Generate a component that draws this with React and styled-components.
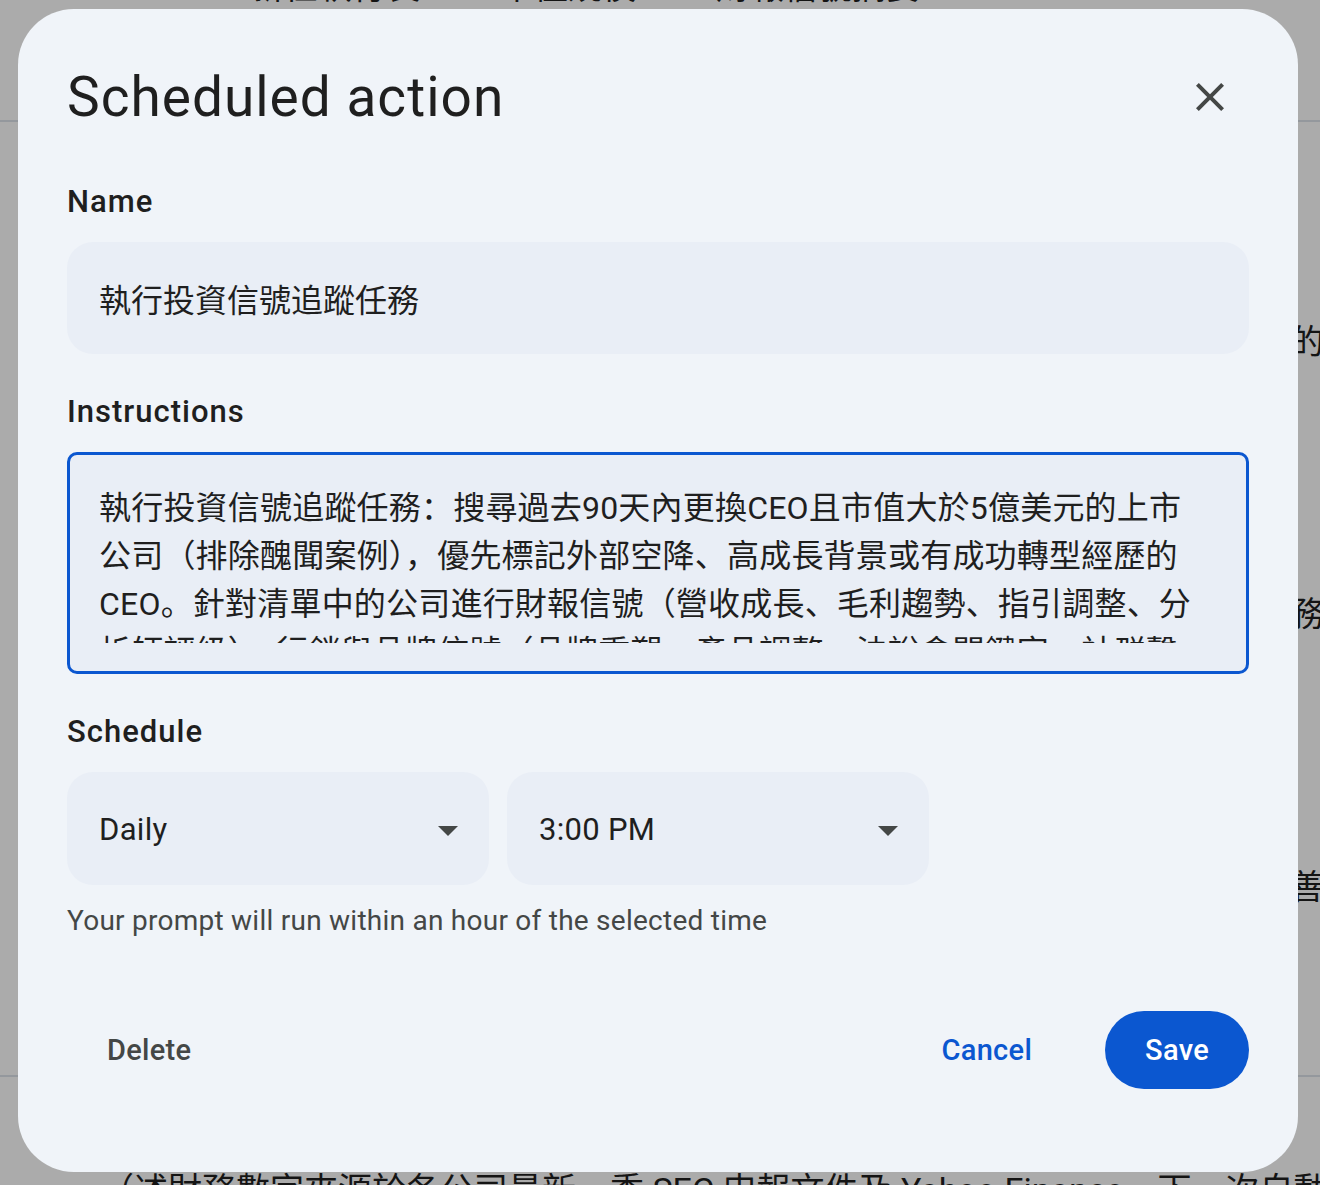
import React from "react";
import styled, { createGlobalStyle } from "styled-components";

const GlobalStyle = createGlobalStyle`
  html, body {
    margin: 0;
    padding: 0;
    background: #ffffff;
    overflow: hidden;
  }
  * {
    box-sizing: border-box;
  }
`;

const SANS = `Roboto, "Noto Sans CJK SC", "Noto Sans CJK TC", sans-serif`;

const Page = styled.div`
  position: relative;
  width: 1320px;
  height: 1185px;
  overflow: hidden;
  background: #ffffff;
  font-family: ${SANS};
  color: #1f1f1f;
`;

const PageContent = styled.div`
  display: flex;
  flex-direction: column;
`;

const TopRow = styled.div`
  display: flex;
  gap: 80px;
  padding-left: 250px;
  margin-top: -37px;
  height: 48px;
  font-size: 34px;
  line-height: 48px;
  white-space: nowrap;
`;

const Rule = styled.div`
  height: 2px;
  background: #dde3ea;
  margin-top: ${(p) => p.$top}px;
`;

const BgLine = styled.div`
  display: flex;
  justify-content: ${(p) => (p.$left ? "flex-start" : "flex-end")};
  padding-left: ${(p) => (p.$left ? "100px" : "0")};
  margin-right: ${(p) => (p.$left ? "0" : "-4px")};
  margin-top: ${(p) => p.$top}px;
  height: 48px;
  font-size: 34px;
  line-height: 48px;
  white-space: nowrap;
`;

const Scrim = styled.div`
  position: fixed;
  inset: 0;
  background: rgba(0, 0, 0, 0.33);
`;

const DialogLayer = styled.div`
  position: fixed;
  inset: 0;
  display: flex;
  align-items: flex-start;
  padding: 9px 0 0 18px;
`;

const Dialog = styled.div`
  width: 1280px;
  height: 1163px;
  background: #f0f4f9;
  border-radius: 56px;
  padding: 56px 49px 0 49px;
  display: flex;
  flex-direction: column;
`;

const Header = styled.div`
  display: flex;
  align-items: center;
  justify-content: space-between;
  height: 64px;
`;

const Title = styled.h2`
  margin: 0;
  font-family: ${SANS};
  font-weight: 400;
  font-size: 55px;
  line-height: 64px;
  color: #1f1f1f;
  letter-spacing: 1px;
`;

const CloseButton = styled.button`
  width: 48px;
  height: 48px;
  margin-right: 15px;
  border: none;
  background: transparent;
  padding: 0;
  display: flex;
  align-items: center;
  justify-content: center;
  color: #444746;
  cursor: pointer;
`;

const Field = styled.div`
  display: flex;
  flex-direction: column;
  gap: 21px;
  margin-top: ${(p) => p.$top}px;
`;

const Label = styled.div`
  font-size: 31px;
  font-weight: 500;
  line-height: 40px;
  letter-spacing: 1px;
  color: #1f1f1f;
  padding-top: 1px;
  height: 40px;
`;

const InputBox = styled.div`
  height: 112px;
  border-radius: 26px;
  background: #e9eef6;
  display: flex;
  align-items: center;
  padding: 0 32px;
  font-size: 32px;
  color: #1f1f1f;
`;

const TextArea = styled.div`
  border: 3px solid #0b57d0;
  border-radius: 10px;
  background: #e9eef6;
  padding: 29px 29px 28px;
`;

const TextClip = styled.div`
  height: 159px;
  overflow: hidden;
  font-size: 32px;
  line-height: 48px;
  color: #1f1f1f;
`;

const TextLine = styled.div`
  white-space: nowrap;
  letter-spacing: 0.2px;
`;

const SelectRow = styled.div`
  display: flex;
  gap: 18px;
`;

const Select = styled.div`
  width: 422px;
  height: 113px;
  border-radius: 26px;
  background: #e9eef6;
  display: flex;
  align-items: center;
  justify-content: space-between;
  padding: 2px 17px 0 32px;
  font-size: 31px;
  letter-spacing: 0.3px;
  color: #1f1f1f;
`;

const Helper = styled.div`
  margin-top: 15px;
  font-size: 28px;
  line-height: 40px;
  letter-spacing: 0.25px;
  color: #444746;
  padding-top: 1px;
  height: 40px;
`;

const Actions = styled.div`
  margin-top: 71px;
  display: flex;
  align-items: center;
`;

const TextButton = styled.button`
  height: 78px;
  border: none;
  background: transparent;
  border-radius: 39px;
  padding: 0 40px;
  font-family: ${SANS};
  font-size: 29px;
  font-weight: 500;
  letter-spacing: 0.3px;
  color: ${(p) => p.$color};
  cursor: pointer;
`;

const Spacer = styled.div`
  flex: 1;
`;

const PrimaryButton = styled.button`
  height: 78px;
  min-width: 143px;
  margin-left: 33px;
  border: none;
  border-radius: 39px;
  padding: 0 40px;
  background: #0b57d0;
  color: #ffffff;
  font-family: ${SANS};
  font-size: 29px;
  font-weight: 500;
  letter-spacing: 0.3px;
  cursor: pointer;
`;

const CloseIcon = () => (
  <svg width="48" height="48" viewBox="0 0 24 24" fill="currentColor">
    <path d="M19 6.41L17.59 5 12 10.59 6.41 5 5 6.41 10.59 12 5 17.59 6.41 19 12 13.41 17.59 19 19 17.59 13.41 12z" />
  </svg>
);

const ArrowDrop = () => (
  <svg width="48" height="48" viewBox="0 0 24 24" fill="#444746">
    <path d="M7 10l5 5 5-5z" />
  </svg>
);

const instructionLines = [
  "執行投資信號追蹤任務：搜尋過去90天內更換CEO且市值大於5億美元的上市",
  "公司（排除醜聞案例），優先標記外部空降、高成長背景或有成功轉型經歷的",
  "CEO。針對清單中的公司進行財報信號（營收成長、毛利趨勢、指引調整、分",
  "析師評級）、行銷與品牌信號（品牌重塑、產品調整、法說會關鍵字、社群聲",
];

export default function App() {
  return (
    <Page>
      <GlobalStyle />
      <PageContent>
        <TopRow>
          <span>新任執行長</span>
          <span>市值規模</span>
          <span>財報信號摘要</span>
        </TopRow>
        <Rule $top={109} />
        <BgLine $top={196}>並具備成功轉型經歷的</BgLine>
        <BgLine $top={224}>持續追蹤其營運財務</BgLine>
        <BgLine $top={225}>毛利率明顯改善</BgLine>
        <Rule $top={164} />
        <BgLine $left $top={89}>
          （述財務數字來源於各公司最新一季 SEC 申報文件及 Yahoo Finance。下一次自動更新時間
        </BgLine>
      </PageContent>
      <Scrim />
      <DialogLayer>
        <Dialog>
          <Header>
            <Title>Scheduled action</Title>
            <CloseButton aria-label="Close">
              <CloseIcon />
            </CloseButton>
          </Header>

          <Field $top={52}>
            <Label>Name</Label>
            <InputBox>執行投資信號追蹤任務</InputBox>
          </Field>

          <Field $top={37}>
            <Label>Instructions</Label>
            <TextArea>
              <TextClip>
                {instructionLines.map((line) => (
                  <TextLine key={line}>{line}</TextLine>
                ))}
              </TextClip>
            </TextArea>
          </Field>

          <Field $top={37}>
            <Label>Schedule</Label>
            <SelectRow>
              <Select>
                <span>Daily</span>
                <ArrowDrop />
              </Select>
              <Select>
                <span>3:00 PM</span>
                <ArrowDrop />
              </Select>
            </SelectRow>
          </Field>
          <Helper>Your prompt will run within an hour of the selected time</Helper>

          <Actions>
            <TextButton $color="#444746">Delete</TextButton>
            <Spacer />
            <TextButton $color="#0b57d0">Cancel</TextButton>
            <PrimaryButton>Save</PrimaryButton>
          </Actions>
        </Dialog>
      </DialogLayer>
    </Page>
  );
}
